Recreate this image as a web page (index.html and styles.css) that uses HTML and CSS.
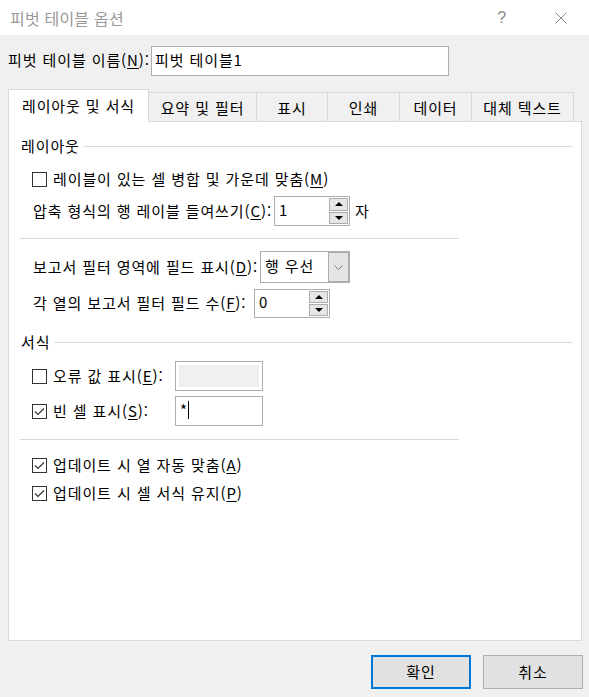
FILE: index.html
```html
<!DOCTYPE html>
<html lang="ko">
<head>
  <meta charset="UTF-8" />
  <meta name="viewport" content="width=device-width, initial-scale=1.0" />
  <title>피벗 테이블 옵션</title>
  <link rel="stylesheet" href="styles.css">
</head>
<body>
  <div class="dialog">
    <div class="titlebar">
      <span class="title">피벗 테이블 옵션</span>
      <span class="help">?</span>
      <svg class="close" width="12" height="12" viewBox="0 0 12 12">
        <path d="M0.5 0.5 L11.5 11.5 M11.5 0.5 L0.5 11.5" stroke="#8a8a8a" stroke-width="1" fill="none" />
      </svg>
    </div>

    <div class="name-row">
      <span class="name-label">피벗 테이블 이름(<u>N</u>):</span>
      <div class="textbox name-box">피벗 테이블1</div>
    </div>

    <div class="tabs">
      <div class="tab active w1">레이아웃 및 서식</div>
      <div class="tab w2">요약 및 필터</div>
      <div class="tab w3">표시</div>
      <div class="tab w4">인쇄</div>
      <div class="tab w4">데이터</div>
      <div class="tab w6">대체 텍스트</div>
    </div>

    <div class="panel">
      <div class="group-title first">
        <span>레이아웃</span>
        <div class="group-line"></div>
      </div>

      <div class="row r1">
        <span class="check"></span>
        <span>레이블이 있는 셀 병합 및 가운데 맞춤(<u>M</u>)</span>
      </div>

      <div class="row r2">
        <span class="label l-indent">압축 형식의 행 레이블 들여쓰기(<u>C</u>):</span>
        <div class="spinner tall">
          <span class="spin-value">1</span>
          <div class="spin-buttons">
            <span class="spin-btn"><i class="tri-up"></i></span>
            <span class="spin-btn"><i class="tri-down"></i></span>
          </div>
        </div>
        <span class="unit">자</span>
      </div>

      <div class="sep s1"></div>

      <div class="row r3">
        <span class="label l-filter">보고서 필터 영역에 필드 표시(<u>D</u>):</span>
        <div class="combo">
          <span class="combo-value">행 우선</span>
          <span class="combo-btn">
            <svg width="9" height="5" viewBox="0 0 9 5">
              <polyline points="0.5,0.5 4.5,4.5 8.5,0.5" stroke="#7a7a7a" stroke-width="1" fill="none" />
            </svg>
          </span>
        </div>
      </div>

      <div class="row r4">
        <span class="label l-count">각 열의 보고서 필터 필드 수(<u>F</u>):</span>
        <div class="spinner">
          <span class="spin-value">0</span>
          <div class="spin-buttons">
            <span class="spin-btn"><i class="tri-up"></i></span>
            <span class="spin-btn"><i class="tri-down"></i></span>
          </div>
        </div>
      </div>

      <div class="group-title second">
        <span>서식</span>
        <div class="group-line"></div>
      </div>

      <div class="row r5">
        <div class="check-label">
          <span class="check"></span>
          <span>오류 값 표시(<u>E</u>):</span>
        </div>
        <div class="textbox small disabled"><div class="fill"></div></div>
      </div>

      <div class="row r6">
        <div class="check-label">
          <span class="check checked">
            <svg width="13" height="13" viewBox="0 0 13 13">
              <polyline points="2,6.5 5,9.5 11,3.5" stroke="#333" stroke-width="1.2" fill="none" />
            </svg>
          </span>
          <span>빈 셀 표시(<u>S</u>):</span>
        </div>
        <div class="textbox small">*<span class="caret"></span></div>
      </div>

      <div class="sep s2"></div>

      <div class="row r7">
        <span class="check checked">
          <svg width="13" height="13" viewBox="0 0 13 13">
            <polyline points="2,6.5 5,9.5 11,3.5" stroke="#333" stroke-width="1.2" fill="none" />
          </svg>
        </span>
        <span>업데이트 시 열 자동 맞춤(<u>A</u>)</span>
      </div>

      <div class="row r8">
        <span class="check checked">
          <svg width="13" height="13" viewBox="0 0 13 13">
            <polyline points="2,6.5 5,9.5 11,3.5" stroke="#333" stroke-width="1.2" fill="none" />
          </svg>
        </span>
        <span>업데이트 시 셀 서식 유지(<u>P</u>)</span>
      </div>
    </div>

    <div class="footer">
      <button class="btn default">확인</button>
      <button class="btn">취소</button>
    </div>
  </div>
</body>
</html>
```

FILE: styles.css
```css
:root {
  --face: #f0f0f0;
  --line: #d9d9d9;
  --edge: #adadad;
  --font: "Noto Sans CJK KR", "Malgun Gothic", "Noto Sans", sans-serif;
}

body {
  margin: 0;
  padding: 0;
  font-family: var(--font);
  font-size: 15px;
  line-height: 20px;
  letter-spacing: 0.9px;
  white-space: nowrap;
  color: #000;
  background-color: var(--face);
}

u {
  text-underline-offset: 2px;
}

.dialog {
  width: 589px;
  height: 697px;
  background-color: var(--face);
}

/* title bar */
.titlebar {
  height: 35px;
  background-color: #fff;
  display: flex;
  align-items: center;
  padding-left: 10px;
  box-sizing: border-box;
}

.title {
  color: #9a9a9a;
  font-size: 16px;
  letter-spacing: 0.2px;
  flex: 1;
}

.help {
  color: #8a8a8a;
  font-family: "Liberation Sans", sans-serif;
  font-size: 16px;
  margin-right: 48px;
}

.close {
  margin-right: 22px;
}

/* name */
.name-row {
  display: flex;
  align-items: center;
  margin-top: 11px;
  padding-left: 8px;
}

.name-label {
  min-width: 143px;
  flex-shrink: 0;
  padding-bottom: 2px;
}

.textbox {
  background-color: #fff;
  border: 1px solid var(--edge);
  box-sizing: border-box;
  display: flex;
  align-items: center;
  flex-shrink: 0;
}

.name-box {
  width: 298px;
  height: 30px;
  padding: 0 0 2px 3px;
}

/* tabs */
.tabs {
  display: flex;
  align-items: flex-end;
  height: 32px;
  margin-top: 13px;
  padding-left: 8px;
}

.tab {
  height: 29px;
  box-sizing: border-box;
  border-top: 1px solid var(--line);
  border-right: 1px solid var(--line);
  display: flex;
  justify-content: center;
  align-items: center;
  padding-top: 1px;
}

.tab.active {
  height: 33px;
  margin-bottom: -1px;
  background-color: #fff;
  border-left: 1px solid var(--line);
  position: relative;
  z-index: 1;
  padding-top: 0;
  padding-bottom: 1px;
}

.w1 { width: 141px; }
.w2 { width: 108px; }
.w3 { width: 71px; }
.w4 { width: 72px; }
.w6 { width: 102px; }

/* panel */
.panel {
  margin-left: 8px;
  width: 574px;
  height: 520px;
  box-sizing: border-box;
  background-color: #fff;
  border: 1px solid var(--line);
}

.group-title {
  display: flex;
  align-items: center;
  gap: 4px;
  height: 20px;
  margin-left: 12px;
  margin-right: 9px;
}

.group-title.first { margin-top: 14px; }
.group-title.second { margin-top: 14px; }

.group-line {
  flex: 1;
  height: 1px;
  background-color: var(--line);
  margin-top: 1px;
}

.row {
  display: flex;
  align-items: center;
  padding-left: 24px;
}

.r1 { height: 28px; margin-top: 9px; }
.r2 { height: 32px; margin-top: 2px; }
.r3 { height: 32px; margin-top: 12px; }
.r4 { height: 30px; margin-top: 5px; }
.r5 { height: 30px; margin-top: 9px; }
.r6 { height: 30px; margin-top: 5px; }
.r7 { height: 24px; margin-top: 13px; }
.r8 { height: 24px; margin-top: 4px; }

.sep {
  height: 1px;
  width: 439px;
  margin-left: 11px;
  background-color: var(--line);
}

.s1 { margin-top: 11px; }
.s2 { margin-top: 13px; }

.check {
  width: 15px;
  height: 15px;
  box-sizing: border-box;
  border: 1px solid #333;
  margin-left: -1px;
  margin-right: 6px;
  flex-shrink: 0;
  display: flex;
  align-items: center;
  justify-content: center;
}

.check-label {
  display: flex;
  align-items: center;
  min-width: 142px;
  flex-shrink: 0;
}

.label {
  flex-shrink: 0;
  padding-bottom: 1px;
}

.l-indent { min-width: 241px; }
.l-filter { min-width: 227px; }
.l-count { min-width: 221px; }

/* spinner */
.spinner {
  width: 76px;
  height: 29px;
  box-sizing: border-box;
  border: 1px solid var(--edge);
  background-color: #fff;
  display: flex;
  flex-shrink: 0;
  padding: 0 1px 0 0;
}

.spinner.tall {
  height: 30px;
}

.spin-value {
  flex: 1;
  padding-left: 4px;
  padding-bottom: 3px;
  display: flex;
  align-items: center;
}

.spin-buttons {
  width: 19px;
  display: flex;
  flex-direction: column;
  padding: 1px 0;
  gap: 1px;
}

.spin-btn {
  flex: 1;
  box-sizing: border-box;
  border: 1px solid var(--edge);
  background-color: #e6e6e6;
  display: flex;
  align-items: center;
  justify-content: center;
}

.tri-up {
  width: 0;
  height: 0;
  border-left: 4px solid transparent;
  border-right: 4px solid transparent;
  border-bottom: 4px solid #000;
}

.tri-down {
  width: 0;
  height: 0;
  border-left: 4px solid transparent;
  border-right: 4px solid transparent;
  border-top: 4px solid #000;
}

.unit {
  margin-left: 5px;
}

/* combo */
.combo {
  width: 90px;
  height: 32px;
  box-sizing: border-box;
  border: 1px solid var(--edge);
  background-color: #fff;
  display: flex;
  flex-shrink: 0;
}

.combo-value {
  flex: 1;
  padding-left: 4px;
  padding-bottom: 3px;
  display: flex;
  align-items: center;
}

.combo-btn {
  width: 21px;
  box-sizing: border-box;
  border: 1px solid var(--edge);
  background-color: #e5e5e5;
  display: flex;
  align-items: center;
  justify-content: center;
}

/* small text boxes */
.textbox.small {
  width: 88px;
  height: 30px;
  padding: 0 0 2px 4px;
}

.textbox.disabled {
  padding: 3px;
}

.fill {
  width: 100%;
  height: 100%;
  background-color: var(--face);
}

.caret {
  display: inline-block;
  width: 1px;
  height: 18px;
  background-color: #000;
}

/* buttons */
.footer {
  display: flex;
  justify-content: flex-end;
  gap: 12px;
  margin-top: 14px;
  padding-right: 6px;
}

.btn {
  width: 100px;
  height: 34px;
  font-family: var(--font);
  font-size: 15px;
  letter-spacing: 0.9px;
  color: #000;
  background-color: #e1e1e1;
  border: 1px solid var(--edge);
  padding: 0 0 2px 0;
  margin: 0;
}

.btn.default {
  border: 2px solid #0078d7;
}
```
